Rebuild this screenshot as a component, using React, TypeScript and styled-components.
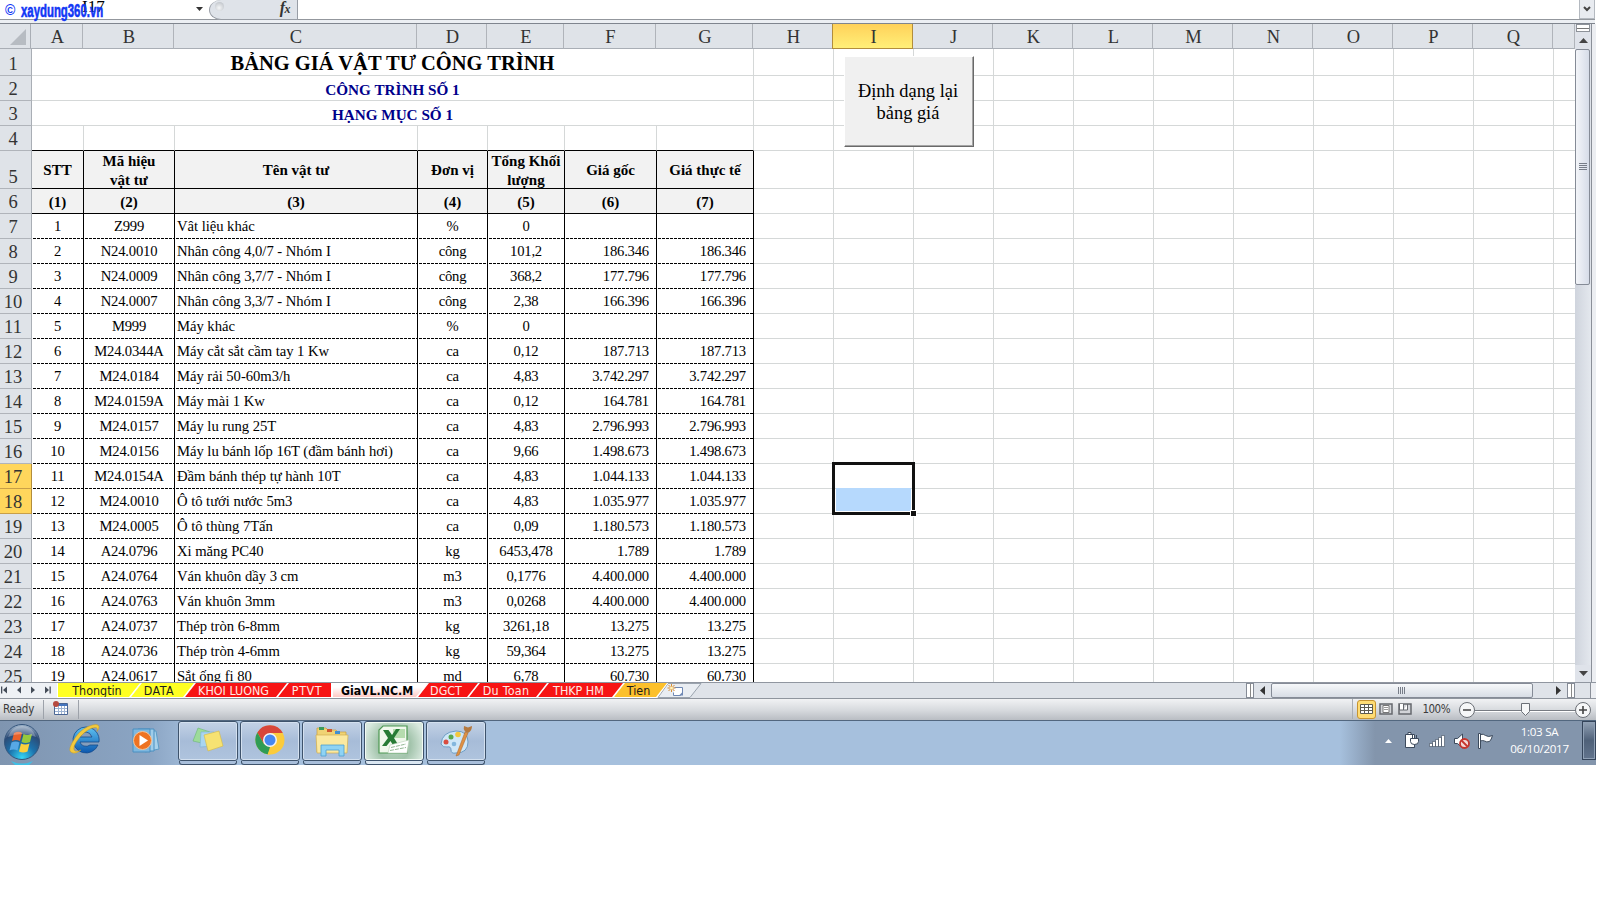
import React from "react";
import styled, { createGlobalStyle, css } from "styled-components";

interface Column {
    name: string;
    width: number;
}

type Align = "left" | "center" | "right";

const columns: Column[] = [
    { name: "A", width: 52 },
    { name: "B", width: 91 },
    { name: "C", width: 243 },
    { name: "D", width: 70 },
    { name: "E", width: 77 },
    { name: "F", width: 92 },
    { name: "G", width: 97 },
    ...["H", "I", "J", "K", "L", "M", "N", "O", "P", "Q"].map(name => ({ name, width: 80 })),
    { name: "", width: 22 },
];

const TABLE_COLUMNS = 7;
const aligns: Align[] = ["center", "center", "left", "center", "center", "right", "right"];

const titles = [
    { text: "BẢNG GIÁ VẬT TƯ CÔNG TRÌNH", height: 27, line: 27, size: 20.5, color: "#000000" },
    { text: "CÔNG TRÌNH SỐ 1", height: 25, line: 25, size: 15.2, color: "#00008b" },
    { text: "HẠNG MỤC SỐ 1", height: 25, line: 25, size: 15.2, color: "#00008b" },
];

const headings = ["STT", "Mã hiệu\nvật tư", "Tên vật tư", "Đơn vị", "Tổng Khối\nlượng", "Giá gốc", "Giá thực tế"];
const numbers = ["(1)", "(2)", "(3)", "(4)", "(5)", "(6)", "(7)"];

const materials: string[][] = [
    ["1", "Z999", "Vât liệu khác", "%", "0", "", ""],
    ["2", "N24.0010", "Nhân công 4,0/7 - Nhóm I", "công", "101,2", "186.346", "186.346"],
    ["3", "N24.0009", "Nhân công 3,7/7 - Nhóm I", "công", "368,2", "177.796", "177.796"],
    ["4", "N24.0007", "Nhân công 3,3/7 - Nhóm I", "công", "2,38", "166.396", "166.396"],
    ["5", "M999", "Máy khác", "%", "0", "", ""],
    ["6", "M24.0344A", "Máy cắt sắt cầm tay 1 Kw", "ca", "0,12", "187.713", "187.713"],
    ["7", "M24.0184", "Máy rải 50-60m3/h", "ca", "4,83", "3.742.297", "3.742.297"],
    ["8", "M24.0159A", "Máy mài 1 Kw", "ca", "0,12", "164.781", "164.781"],
    ["9", "M24.0157", "Máy lu rung 25T", "ca", "4,83", "2.796.993", "2.796.993"],
    ["10", "M24.0156", "Máy lu bánh lốp 16T (đầm bánh hơi)", "ca", "9,66", "1.498.673", "1.498.673"],
    ["11", "M24.0154A", "Đầm bánh thép tự hành 10T", "ca", "4,83", "1.044.133", "1.044.133"],
    ["12", "M24.0010", "Ô tô tưới nước 5m3", "ca", "4,83", "1.035.977", "1.035.977"],
    ["13", "M24.0005", "Ô tô thùng 7Tấn", "ca", "0,09", "1.180.573", "1.180.573"],
    ["14", "A24.0796", "Xi măng PC40", "kg", "6453,478", "1.789", "1.789"],
    ["15", "A24.0764", "Ván khuôn dầy 3 cm", "m3", "0,1776", "4.400.000", "4.400.000"],
    ["16", "A24.0763", "Ván khuôn 3mm", "m3", "0,0268", "4.400.000", "4.400.000"],
    ["17", "A24.0737", "Thép tròn 6-8mm", "kg", "3261,18", "13.275", "13.275"],
    ["18", "A24.0736", "Thép tròn 4-6mm", "kg", "59,364", "13.275", "13.275"],
    ["19", "A24.0617", "Sắt ống fi 80", "md", "6,78", "60.730", "60.730"],
];

const tabs = [
    { name: "Thongtin", width: 84, fill: "#ffff22", ink: "#1c1c1c", first: true },
    { name: "DATA", width: 65, fill: "#ffff22", ink: "#1c1c1c", spacing: 0.5, shift: 3 },
    { name: "KHOI LUONG", width: 104, fill: "#f71414", ink: "#ffe9e4", shift: 1 },
    { name: "PTVT", width: 55, fill: "#f71414", ink: "#ffe9e4", spacing: 0.6, flat: true },
    { name: "GiaVL.NC.M", width: 96, fill: "#ffc9c4", ink: "#000000", active: true },
    { name: "DGCT", width: 62, fill: "#f71414", ink: "#ffe9e4" },
    { name: "Du Toan", width: 80, fill: "#f71414", ink: "#ffe9e4", spacing: 0.3 },
    { name: "THKP HM", width: 87, fill: "#f71414", ink: "#ffe9e4" },
    { name: "Tien", width: 55, fill: "#fcc02c", ink: "#1c1c1c" },
];

export default function App() {
    return (
        <>
            <GlobalStyle />
            <SScreen>
                <FormulaBar />
                <SWorkArea>
                    <Sheet />
                    <VerticalScroll />
                    <SWindowEdge />
                </SWorkArea>
                <SheetTabs />
                <StatusBar />
                <Taskbar />
            </SScreen>
        </>
    );
}

const FormulaBar: React.FC = () => (
    <SFormulaBar>
        <SNameBox>
            <SCellName>I17</SCellName>
            <SWatermark><span>©</span><b>xaydung360.vn</b></SWatermark>
            <svg width="7" height="4"><path d="M0 0h7L3.5 4z" fill="#333" /></svg>
        </SNameBox>
        <SFxArea><SKnob /><SFx>f<small>x</small></SFx></SFxArea>
        <SFormulaInput />
        <SExpand>
            <svg width="8" height="6"><path d="M1 1l3 3 3-3" fill="none" stroke="#444" strokeWidth="2" /></svg>
        </SExpand>
    </SFormulaBar>
);

const Sheet: React.FC = () => (
    <SSheet>
        <SRow $height={25}>
            <SCorner><svg width="16" height="16"><path d="M16 0v16H0z" fill="#b7bcc2" /></svg></SCorner>
            {columns.map(col => (
                <SColumnHead key={col.name} $width={col.width} $active={col.name === "I"}>{col.name}</SColumnHead>
            ))}
        </SRow>
        {titles.map((title, i) => (
            <SRow key={title.text} $height={title.height}>
                <SRowHead>{i + 1}</SRowHead>
                <STitle $size={title.size} $line={title.line} $color={title.color}>{title.text}</STitle>
                <BlankCells from={TABLE_COLUMNS} />
            </SRow>
        ))}
        <SRow $height={25}>
            <SRowHead>4</SRowHead>
            {columns.slice(0, TABLE_COLUMNS).map(col => (
                <SBlank key={col.name} $width={col.width} $dark />
            ))}
            <BlankCells from={TABLE_COLUMNS} />
        </SRow>
        <SRow $height={38}>
            <SRowHead>5</SRowHead>
            {headings.map((text, i) => <SHeadCell key={text} $width={columns[i].width}>{text}</SHeadCell>)}
            <BlankCells from={TABLE_COLUMNS} />
        </SRow>
        <SRow $height={25}>
            <SRowHead>6</SRowHead>
            {numbers.map((text, i) => <SHeadCell key={text} $width={columns[i].width}>{text}</SHeadCell>)}
            <BlankCells from={TABLE_COLUMNS} />
        </SRow>
        {materials.map((cells, r) => (
            <SRow key={cells[0]} $height={25}>
                <SRowHead $active={r === 10 || r === 11}>{r + 7}</SRowHead>
                {cells.map((text, i) => (
                    <SDataCell key={i} $width={columns[i].width} $align={aligns[i]}>{text}</SDataCell>
                ))}
                <BlankCells from={TABLE_COLUMNS} />
            </SRow>
        ))}
        <SSelection><SSelectionFill /><SHandle /></SSelection>
        <SMacroButton>Định dạng lại{"\n"}bảng giá</SMacroButton>
    </SSheet>
);

const BlankCells: React.FC<{ from: number }> = ({ from }) => (
    <>
        {columns.slice(from).map(col => <SBlank key={col.name} $width={col.width} />)}
    </>
);

const VerticalScroll: React.FC = () => (
    <SVScroll>
        <SSplitBox />
        <SArrowBox><svg width="9" height="5"><path d="M4.500 0L9 5H0z" fill="#444" /></svg></SArrowBox>
        <SVThumb>
            <svg width="8" height="8"><path d="M0 .5h8M0 2.500h8M0 4.500h8M0 6.500h8" stroke="#777d88" /></svg>
        </SVThumb>
        <SVTrack />
        <SArrowBox><svg width="9" height="5"><path d="M0 0h9L4.500 5z" fill="#444" /></svg></SArrowBox>
    </SVScroll>
);

const SheetTabs: React.FC = () => (
    <STabBar>
        <STabNav>
            <svg width="57" height="15" fill="#444c58">
                <path d="M1 3.500h1.300v7H1zM7 3.500v7L3 7zM21 3.500v7L17 7zM31 3.500v7L35 7zM45 3.500v7L49 7zM49.500 3.500h1.300v7h-1.300z" />
            </svg>
        </STabNav>
        {tabs.map(tab => (
            <STab key={tab.name} $width={tab.width} $first={tab.first} $flat={tab.flat} $active={tab.active}>
                <STabFace
                    $fill={tab.fill}
                    $ink={tab.ink}
                    $first={tab.first}
                    $flat={tab.flat}
                    $active={tab.active}
                    $spacing={tab.spacing}
                    $shift={tab.shift}
                >
                    {tab.name}
                </STabFace>
            </STab>
        ))}
        <SNewTab width="46" height="15" viewBox="0 0 46 15">
            <path d="M11 .5h33L33 14.500H1z" fill="#e9edf2" stroke="#9aa3ae" />
            <path d="M17.500 4.500h8v6l-2 2h-7v-3" fill="#fff" stroke="#6f88b4" />
            <path d="M22 12.500l4-4v4z" fill="#6f88b4" />
            <path d="M14.500 1v8M10.500 5h8M11.500 2l6 6M17.500 2l-6 6" stroke="#d88d32" />
            <circle cx="14.500" cy="5" r="1.500" fill="#fff3b8" />
        </SNewTab>
        <STabSpacer />
        <SHSplit />
        <SHArrow><svg width="5" height="9"><path d="M5 0v9L0 4.500z" fill="#333" /></svg></SHArrow>
        <SHThumb>
            <svg width="8" height="7"><path d="M.5 0v7M2.500 0v7M4.500 0v7M6.500 0v7" stroke="#777d88" /></svg>
        </SHThumb>
        <SHTrack />
        <SHArrow><svg width="5" height="9"><path d="M0 0v9l5-4.500z" fill="#333" /></svg></SHArrow>
        <SHSplit />
        <STabEnd />
    </STabBar>
);

const StatusBar: React.FC = () => (
    <SStatusBar>
        <SReady>Ready</SReady>
        <SMacroIcon>
            <svg width="15" height="14" viewBox="0 0 15 14">
                <path d="M1.500 2.500h13v11h-13z" fill="#fff" stroke="#4a6694" />
                <path d="M2 3h12v2H2z" fill="#4475be" />
                <path d="M2 7.500h12M2 10.500h12M5.500 5v8M8.500 5v8M11.500 5v8" stroke="#9cb2d2" />
                <circle cx="3" cy="3" r="3" fill="#b5493f" />
            </svg>
        </SMacroIcon>
        <SStatusSpacer />
        <SViews>
            <SViewButton $active>
                <svg width="13" height="10"><path d="M.5.5h12v9H.5zM.5 3.500h12M.5 6.500h12M4.500 0v10M8.500 0v10" fill="#fff" stroke="#5d5b50" /></svg>
            </SViewButton>
            <SViewButton>
                <svg width="14" height="12"><path d="M1 1h12v10H1z" fill="#d2d4d8" stroke="#65686e" strokeWidth="1.500" /><path d="M4 2.500h6v7H4z" fill="#fff" stroke="#777" /><path d="M5 4.500h4M5 6.500h4" stroke="#999" /></svg>
            </SViewButton>
            <SViewButton>
                <svg width="14" height="12"><path d="M1 1h12v10H1z" fill="#d2d4d8" stroke="#65686e" strokeWidth="1.500" /><path d="M1.500 1v6h4V1M5.500 7h4V1" fill="#fff" stroke="#65686e" /></svg>
            </SViewButton>
        </SViews>
        <SZoomText>100%</SZoomText>
        <svg width="134" height="18" viewBox="0 0 134 18">
            <path d="M17 9.500h101" stroke="#777b82" />
            <path d="M17 10.500h101" stroke="#fff" />
            <g fill="#f6f7f8" stroke="#6b6f76">
                <circle cx="9" cy="9" r="7.500" />
                <circle cx="125" cy="9" r="7.500" />
                <path d="M63.500 2.500h8v8l-4 4-4-4z" />
            </g>
            <path d="M5 9h8M121 9h8M125 5v8" stroke="#444" strokeWidth="1.600" />
        </svg>
    </SStatusBar>
);

const Taskbar: React.FC = () => (
    <STaskbar>
        <SQuick $left={4} $top={2} $width={62}><StartOrb /></SQuick>
        <SQuick $left={6} $top={2} $width={66}><ExplorerLogo /></SQuick>
        <SQuick $left={4} $top={6} $width={42}><MediaPlayer /></SQuick>
        <STasks>
            <STask><StickyNotes /></STask>
            <STask><Chrome /></STask>
            <STask><Folder /></STask>
            <STask $active><Excel /></STask>
            <STask><Palette /></STask>
        </STasks>
        <STray>
            <TrayIcons />
            <SClock><span>1:03 SA</span><span>06/10/2017</span></SClock>
            <SShowDesktop />
        </STray>
    </STaskbar>
);

const StartOrb: React.FC = () => (
    <svg width="38" height="45" viewBox="0 0 38 45">
        <defs>
            <radialGradient id="orb" cx=".5" cy=".95" r=".95">
                <stop offset="0" stopColor="#35d6f5" />
                <stop offset=".4" stopColor="#1c73ad" />
                <stop offset=".75" stopColor="#2c4b76" />
                <stop offset="1" stopColor="#a9bdd2" />
            </radialGradient>
        </defs>
        <path d="M7 38q11 5 22 0l-4 4q-7 2-14 0z" fill="#3fc0e6" />
        <circle cx="18" cy="19" r="17.500" fill="url(#orb)" stroke="#34557c" />
        <path d="M10 10q5-2.500 8 0l-2 8q-4-2-8 0z" fill="#e9612a" />
        <path d="M19.500 11q4 2 8.500 0l-2 8q-4.500 2-8.500 0z" fill="#97c93c" />
        <path d="M7.500 19.500q4-2 8 0l-2 8q-4-2-8 0z" fill="#57a8e6" />
        <path d="M17 20.500q4 2 8.500 0l-2 8q-4.500 2-8.500 0z" fill="#fbd03c" />
        <path d="M4 14Q8 3 18 3t14 11q-14-6-28 0z" fill="#fff" opacity=".28" />
    </svg>
);

const ExplorerLogo: React.FC = () => (
    <svg width="34" height="34" viewBox="0 0 34 34">
        <defs>
            <linearGradient id="ie" x2="0" y2="1">
                <stop offset="0" stopColor="#5fc3f2" />
                <stop offset="1" stopColor="#0b57ae" />
            </linearGradient>
        </defs>
        <path
            d="M18 4a13 13 0 1 0 12 18h-8a6 5 0 0 1-10-3h19A13 13 0 0 0 18 4zM12 14q2-5 6-5t6 5z"
            fill="url(#ie)" stroke="#154b8c" strokeWidth=".8" fillRule="evenodd"
        />
        <path d="M5 30q-6-1-1-10Q10 8 20 3.500q10-4 11 0 .5 2-2 5 1.500-4-2-4Q20 5 12 14 3 25 7 28q2 1 6-1-5 4-8 3z" fill="#f3c93d" stroke="#c39824" strokeWidth=".5" />
    </svg>
);

const MediaPlayer: React.FC = () => (
    <svg width="30" height="28" viewBox="0 0 30 28">
        <path d="M10 4h14l3 18-14 3z" fill="#a9d2ec" stroke="#5c9cc6" />
        <path d="M6 2h16v22H6z" fill="#9fcdea" stroke="#4b8fc0" />
        <path d="M1 2h17v23H1z" fill="#7fb8df" stroke="#4b8fc0" />
        <circle cx="10.500" cy="13.500" r="9" fill="#ee7322" stroke="#f8c395" />
        <path d="M7.500 8l8.500 5.500L7.500 19z" fill="#fff" />
    </svg>
);

const StickyNotes: React.FC = () => (
    <svg width="32" height="28" viewBox="0 0 32 28">
        <path d="M6 3l12 4-4 12L1 16z" fill="#9ddb9a" stroke="#6cb873" strokeWidth=".6" />
        <path d="M9 7h13l1 14-15 1z" fill="#a9d5f1" stroke="#7ab0d8" strokeWidth=".6" />
        <path d="M12 10l15-4 4 15-15 5z" fill="#f6e272" stroke="#d4b945" strokeWidth=".6" />
    </svg>
);

const Chrome: React.FC = () => (
    <svg width="30" height="30" viewBox="0 0 30 30">
        <circle cx="15" cy="15" r="14.500" fill="#fbcb3c" />
        <path d="M15 15L8.700 18.500 2.300 7.600A14.500 14.500 0 0 1 27.800 8H15z" fill="#d8463a" />
        <path d="M2.300 7.600L8.700 18.500 15 22l-2.200 7.300A14.500 14.500 0 0 1 2.300 7.600z" fill="#2f9c55" />
        <path d="M21.300 18.500L15 29.500h-2.500L17 21z" fill="#fbcb3c" />
        <circle cx="15" cy="15" r="7" fill="#f4f4f4" />
        <circle cx="15" cy="15" r="5.500" fill="#4688f1" />
    </svg>
);

const Folder: React.FC = () => (
    <svg width="34" height="32" viewBox="0 0 34 32">
        <path d="M2 3h9l2 2h8l2 2h8v20H2z" fill="#f0d374" stroke="#c79f40" strokeWidth=".7" />
        <path d="M4 2h5v3H4z" fill="#3b9b5c" />
        <path d="M12 4h5v3h-5z" fill="#d0572f" />
        <path d="M20 6h5v3h-5z" fill="#408fd1" />
        <path d="M1 10h32l-1 18H2z" fill="#fbe9a0" stroke="#d3b050" strokeWidth=".7" />
        <path d="M6 31V20h23v11h-5v-6H11v6z" fill="#8fd3f4" stroke="#4da0d0" strokeWidth=".8" />
    </svg>
);

const Excel: React.FC = () => (
    <svg width="32" height="32" viewBox="0 0 32 32">
        <path d="M5 1h24v27H1V5z" fill="#f0f8ec" stroke="#4d9852" strokeWidth="1.200" />
        <path d="M15 4h12v9H15z" fill="#b5dcae" />
        <path d="M5 5h5.500l3.500 5 4-6h4l-6 9 5 8h-5.500l-3-5-4 5H4l6-8z" fill="#277b35" />
        <path d="M12 20l19-5-2 13H10z" fill="#fff" stroke="#b7d0b5" strokeWidth=".6" />
        <path d="M13 22.500l15-3.500M12 25.500l16-3" stroke="#93b894" strokeDasharray="4 1" />
    </svg>
);

const Palette: React.FC = () => (
    <svg width="34" height="32" viewBox="0 0 34 32">
        <path d="M2 19Q3 7 17 6q12 0 12 11T17 28q-5 1-5-3t-4-3-6-3z" fill="#cfe7f7" stroke="#6c9cc4" />
        <circle cx="7" cy="17" r="2.500" fill="#d94d40" />
        <circle cx="12" cy="12" r="2.500" fill="#57a84f" />
        <circle cx="19" cy="9.500" r="2.800" fill="#f2c83c" />
        <circle cx="15" cy="19" r="2.300" fill="#83b7dd" />
        <path d="M26 7l3 1-9 22-3 1z" fill="#de9144" stroke="#a9642a" strokeWidth=".5" />
        <path d="M25 1l4 1.500L33 1q0 5-4 7l-3-1.500q-2-2.500-1-5.500z" fill="#b5793f" />
    </svg>
);

const TrayIcons: React.FC = () => (
    <STrayIcons width="108" height="20" viewBox="0 0 108 20">
        <path d="M0 12h7L3.500 8z" fill="#fff" />
        <g fill="#fff" stroke="#3c4a5c">
            <path d="M20.500 3.500h9v13h-9zM23 1.500h3v2h-3z" />
            <path d="M25.500 7.500h8v3q0 3-4 3t-4-3zM27.500 4v3.500M31.500 4v3.500M29.500 13.500v3h-4" />
            <path d="M44.500 12.500h3v3h-3zM47.500 10.500h3v5h-3zM50.500 8.500h3v7h-3zM53.500 6.500h3v9h-3zM56.500 4.500h3v11h-3z" strokeWidth=".6" />
            <path d="M69.500 7.500h3l5-4.500v14l-5-4.500h-3z" />
            <path d="M93.500 2.500h2v15h-2zM95.500 3.500q3-1 5 1 3 2 7 0-1 4-3 6-3 1-5-.5-2-1-4 0z" />
        </g>
        <circle cx="79.500" cy="12.500" r="4.500" fill="#f3dbd8" stroke="#c5352c" strokeWidth="1.800" />
        <path d="M76.500 9.500l6 6" stroke="#c5352c" strokeWidth="1.800" />
    </STrayIcons>
);

const GlobalStyle = createGlobalStyle`
    body {
        margin: 0;
        background: #ffffff;
    }
    *, *::before, *::after {
        box-sizing: border-box;
    }
    svg {
        flex: none;
        display: block;
    }
`

const serif = css`
    font-family: "Liberation Serif", "Times New Roman", serif;
`

const tahoma = css`
    font-family: "DejaVu Sans Condensed", "DejaVu Sans", sans-serif;
`

const SScreen = styled.main`
    width: 1600px;
    height: 900px;
    overflow: hidden;
    background: #ffffff;
    ${serif}
`

const SFormulaBar = styled.div`
    display: flex;
    width: 1595px;
    height: 24px;
    border-bottom: 1px solid #7f858e;
    background: linear-gradient(#ffffff 0 19px, #93979d 19px 20px, #eceff3 20px);
`

const SNameBox = styled.div`
    position: relative;
    display: flex;
    justify-content: flex-end;
    width: 209px;
    height: 19px;
    padding: 7px 6px 0 0;
`

const SCellName = styled.span`
    position: absolute;
    left: 82px;
    top: -3px;
    font-size: 17px;
    line-height: 20px;
`

const SWatermark = styled.div`
    position: absolute;
    left: 5px;
    top: 0;
    display: flex;
    gap: 6px;
    color: #1238f5;
    font-family: "Liberation Sans", Arial, sans-serif;
    font-size: 14px;
    font-weight: bold;
    line-height: 21px;
    white-space: nowrap;

    b {
        width: 82px;
        font-size: 17.5px;
        line-height: 23px;
        transform: scaleX(0.65);
        transform-origin: left;
        -webkit-text-stroke: 0.6px #1238f5;
    }
`

const SFxArea = styled.div`
    display: flex;
    justify-content: space-between;
    width: 89px;
    height: 20px;
    padding: 2px 7px 0 5px;
    border: 1px solid #989da5;
    border-top: none;
    border-radius: 12px 0 0 12px / 10px 0 0 10px;
    background: #dfe3e9;
`

const SKnob = styled.i`
    width: 9px;
    height: 9px;
    border-radius: 50%;
    background: radial-gradient(circle at 45% 65%, #f6f7f8, #b3b8bf);
`

const SFx = styled.em`
    font-size: 16px;
    font-weight: bold;
    line-height: 12px;
    letter-spacing: -0.5px;
    color: #333333;

    small {
        font-size: 12px;
    }
`

const SFormulaInput = styled.div`
    flex: 1;
`

const SExpand = styled.div`
    display: flex;
    align-items: center;
    justify-content: center;
    width: 16px;
    height: 19px;
    border: 1px solid #b4b9c0;
    border-top: none;
    background: #e8ebf0;
`

const SWorkArea = styled.div`
    display: flex;
    width: 1596px;
    height: 658px;
`

const SSheet = styled.div`
    position: relative;
    width: 1575px;
    overflow: hidden;
`

const SRow = styled.div<{ $height: number }>`
    display: flex;
    height: ${p => p.$height}px;
`

const SCorner = styled.div`
    display: flex;
    align-items: flex-end;
    justify-content: flex-end;
    width: 32px;
    padding: 0 4px 3px 0;
    border-right: 1px solid #a9aeb5;
    border-bottom: 1px solid #a9aeb5;
    background: #dfe3e8;
`

const SColumnHead = styled.div<{ $width: number; $active?: boolean }>`
    flex: none;
    width: ${p => p.$width}px;
    padding-left: 2px;
    border-right: 1px solid ${p => (p.$active ? "#b28d3c" : "#b0b4ba")};
    border-bottom: 1px solid ${p => (p.$active ? "#b28d3c" : "#a9aeb5")};
    background: ${p => (p.$active ? "linear-gradient(#ffd15a, #ffef78)" : "#dfe3e8")};
    box-shadow: ${p => (p.$active ? "-1px 0 #b28d3c" : "none")};
    color: #333333;
    font-size: 18.5px;
    line-height: 27px;
    text-align: center;
`

const SRowHead = styled.div<{ $active?: boolean }>`
    flex: none;
    display: flex;
    align-items: flex-end;
    justify-content: center;
    width: 32px;
    padding-right: 5px;
    border-right: 1px solid ${p => (p.$active ? "#b28d3c" : "#a9aeb5")};
    border-bottom: 1px solid ${p => (p.$active ? "#c89f48" : "#b0b4ba")};
    background: ${p => (p.$active ? "#ffd65c" : "#dfe3e8")};
    color: #333333;
    font-size: 18.5px;
    line-height: 21px;
`

const STitle = styled.div<{ $size: number; $line: number; $color: string }>`
    flex: none;
    width: 722px;
    padding-top: 1px;
    border-right: 1px solid #d5d8d8;
    border-bottom: 1px solid #d5d8d8;
    color: ${p => p.$color};
    font-size: ${p => p.$size}px;
    font-weight: bold;
    line-height: ${p => p.$line}px;
    text-align: center;
`

const SBlank = styled.div<{ $width: number; $dark?: boolean }>`
    flex: none;
    width: ${p => p.$width}px;
    border-right: 1px solid #d5d8d8;
    border-bottom: 1px solid ${p => (p.$dark ? "#000000" : "#d5d8d8")};
`

const SHeadCell = styled.div<{ $width: number }>`
    flex: none;
    display: flex;
    align-items: center;
    justify-content: center;
    width: ${p => p.$width}px;
    padding-top: 2px;
    border-right: 1px solid #000000;
    border-bottom: 1px solid #000000;
    background: #f2f2f2;
    font-size: 15px;
    font-weight: bold;
    line-height: 19px;
    text-align: center;
    white-space: pre;
`

const SDataCell = styled.div<{ $width: number; $align: Align }>`
    flex: none;
    width: ${p => p.$width}px;
    padding: 0 ${p => (p.$align === "right" ? 7 : 0)}px 0 ${p => (p.$align === "left" ? 2 : 0)}px;
    border-right: 1px solid #000000;
    background: repeating-linear-gradient(90deg, #ffffff 0 1px, #000000 1px 4px) left bottom / 100% 1px no-repeat;
    font-size: 14.67px;
    letter-spacing: ${p => (p.$align === "left" ? -0.04 : -0.2)}px;
    line-height: 25px;
    text-align: ${p => p.$align};
    white-space: nowrap;
`

// Marks I17:I18, drawn over the grid lines
const SSelection = styled.div`
    position: absolute;
    left: 832px;
    top: 438px;
    width: 83px;
    height: 53px;
    padding: 23px 1px 1px;
    border: 3px solid #111111;
`

const SSelectionFill = styled.div`
    height: 23px;
    background: #b6d9fd;
`

const SHandle = styled.i`
    position: absolute;
    right: -5px;
    bottom: -5px;
    width: 7px;
    height: 7px;
    border: 1px solid #ffffff;
    background: #111111;
`

const SMacroButton = styled.button`
    position: absolute;
    left: 844px;
    top: 32px;
    width: 130px;
    height: 91px;
    padding: 0 2px 0 0;
    border: 1px solid;
    border-color: #ffffff #696969 #696969 #ffffff;
    background: #f0f0f0;
    box-shadow: inset -1px -1px #a5a5a5;
    color: #000000;
    ${serif}
    font-size: 18.4px;
    line-height: 22px;
    white-space: pre;
`

const SVScroll = styled.div`
    display: flex;
    flex-direction: column;
    width: 16px;
    background: #dfe3ea;
`

const SSplitBox = styled.i`
    height: 8px;
    margin: 0 1px;
    border: 1px solid #8d9299;
    background: linear-gradient(#ffffff 3px, #777777 3px 4px, #ffffff 4px);
`

const SArrowBox = styled.div`
    display: flex;
    align-items: center;
    justify-content: center;
    height: 17px;
`

const SVThumb = styled.div`
    display: flex;
    align-items: center;
    justify-content: center;
    width: 15px;
    height: 236px;
    border: 1px solid #858b96;
    border-radius: 2px;
    background: linear-gradient(90deg, #f3f5f9, #d6dce8);
`

const SVTrack = styled.div`
    flex: 1;
    background: linear-gradient(90deg, #cfd4dd, #e4e8ee);
`

const SWindowEdge = styled.div`
    flex: 1;
    border-left: 1px solid #8a8f98;
    background: #eceef2;
`

const STabBar = styled.div`
    display: flex;
    width: 1596px;
    height: 16px;
    border-top: 1px solid #9096a0;
    background: #dfe3e9;
`

const STabNav = styled.div`
    width: 57px;
    background: #eef1f5;
`

interface TabShape {
    $first?: boolean;
    $flat?: boolean;
    $active?: boolean;
}

interface TabLook extends TabShape {
    $fill: string;
    $ink: string;
    $spacing?: number;
    $shift?: number;
}

const tabClip = (p: TabShape) => {
    const left = p.$first || p.$active ? "0" : "11px";
    const right = p.$flat ? "100%" : "calc(100% - 11px)";
    return `polygon(${left} 0, 100% 0, ${right} 100%, 0 100%)`;
};

const STab = styled.div<TabShape & { $width: number }>`
    flex: none;
    width: ${p => p.$width}px;
    height: 15px;
    margin-left: ${p => (p.$first || p.$active ? 0 : -11)}px;
    padding: 0 1px 1px;
    background: #ffffff;
    clip-path: ${tabClip};
`

const STabFace = styled.div<TabLook>`
    height: 14px;
    padding-right: ${p => (p.$flat ? 0 : p.$active ? 6 : 4 + (p.$shift ?? 0))}px;
    padding-left: ${p => (p.$flat ? 5 : 0)}px;
    background: ${p => (p.$active ? `linear-gradient(#ffffff 30%, ${p.$fill})` : p.$fill)};
    clip-path: ${tabClip};
    color: ${p => p.$ink};
    ${tahoma}
    font-size: ${p => (p.$active ? 12.2 : 12.4)}px;
    font-weight: ${p => (p.$active ? "bold" : "normal")};
    letter-spacing: ${p => p.$spacing ?? 0}px;
    line-height: ${p => (p.$active ? 16 : 15)}px;
    text-align: center;
    white-space: nowrap;
`

const SNewTab = styled.svg`
    margin-left: -11px;
`

const STabSpacer = styled.div`
    flex: 1;
`

const SHSplit = styled.i`
    width: 8px;
    height: 15px;
    border: 1px solid #858b96;
    background: linear-gradient(90deg, #ffffff 3px, #888888 3px 4px, #ffffff 4px);
`

const SHArrow = styled.div`
    display: flex;
    align-items: center;
    justify-content: center;
    width: 17px;
`

const SHThumb = styled.div`
    display: flex;
    align-items: center;
    justify-content: center;
    width: 262px;
    height: 15px;
    border: 1px solid #858b96;
    border-radius: 2px;
    background: linear-gradient(#f6f8fa, #d8dde5);
`

const SHTrack = styled.div`
    width: 17px;
`

const STabEnd = styled.div`
    width: 21px;
    border-right: 5px solid #eceef2;
    box-shadow: inset -1px 0 #8a8f98;
`

const SStatusBar = styled.div`
    display: flex;
    align-items: center;
    width: 1596px;
    height: 22px;
    padding-right: 4px;
    border-top: 1px solid #8f959e;
    background: linear-gradient(#f1f2f4, #d6d9dd 55%, #b9bdc3);
    ${tahoma}
`

const SReady = styled.span`
    width: 43px;
    padding-left: 3px;
    color: #3b3b3b;
    font-size: 11.5px;
    letter-spacing: -0.2px;
    line-height: 14px;
    margin-top: -1px;
`

const SMacroIcon = styled.div`
    display: flex;
    align-items: center;
    justify-content: center;
    width: 36px;
    height: 19px;
    padding-right: 2px;
    border: 1px solid #9da2aa;
    border-width: 0 1px;

    svg {
        margin-top: -3px;
    }
`

const SStatusSpacer = styled.div`
    flex: 1;
`

const SViews = styled.div`
    display: flex;
    align-items: center;
    height: 20px;
    margin-top: -1px;
    padding-left: 4px;
    border-left: 1px solid #a8adb4;
`

const SViewButton = styled.div<{ $active?: boolean }>`
    display: flex;
    align-items: center;
    justify-content: center;
    width: 19px;
    height: 19px;
    border-radius: 3px;
    border: ${p => (p.$active ? "1px solid #c79431" : "none")};
    background: ${p => (p.$active ? "#ffdc74" : "none")};
`

const SZoomText = styled.span`
    margin-top: -1px;
    padding: 0 8px 0 8px;
    color: #3b3b3b;
    font-size: 11.5px;
    letter-spacing: -0.5px;
`

const STaskbar = styled.div`
    display: flex;
    width: 1596px;
    height: 45px;
    border-top: 1px solid #52677f;
    background: linear-gradient(90deg, #7f95b0 0, #8ba5c4 150px, #a6c0dd 200px, #a6c0dd 1340px, #8395ac 1375px, #8395ac 100%);
    overflow: hidden;
`

const SQuick = styled.div<{ $left: number; $top: number; $width: number }>`
    width: ${p => p.$width}px;
    padding: ${p => p.$top}px 0 0 ${p => p.$left}px;
`

const STasks = styled.div`
    display: flex;
    gap: 2px;
    margin-left: 8px;
`

const STask = styled.div<{ $active?: boolean }>`
    position: relative;
    display: flex;
    justify-content: center;
    width: 60px;
    height: 40px;
    padding: 3px 1px 0 0;
    border: 1px solid #3e536c;
    border-radius: 3px;
    background: ${p => (p.$active
        ? "radial-gradient(circle at 50% 60%, #b9d8c0, #a3c4ac 45%, #d9e9df 85%)"
        : "linear-gradient(#c3d2e6, #a7bcd8 50%, #afc4de)")};
    box-shadow: inset 0 0 0 1px ${p => (p.$active ? "#f2faf3" : "#d3e0ef")};

    &::after {
        content: "";
        position: absolute;
        left: 0;
        right: 0;
        top: 39px;
        height: 4px;
        border: 1px solid #3e536c;
        border-top: none;
        border-radius: 0 0 3px 3px;
        background: ${p => (p.$active ? "#dbe7f2" : "#a9bfdb")};
    }
`

const STray = styled.div`
    display: flex;
    align-items: center;
    margin-left: auto;
`

const STrayIcons = styled.svg`
    margin-bottom: 5px;
`

const SClock = styled.div`
    display: flex;
    flex-direction: column;
    align-items: center;
    width: 59px;
    margin: 0 13px 6px 17px;
    color: #ffffff;
    font-family: "Open Sans", "Noto Sans", sans-serif;
    font-size: 11.6px;
    letter-spacing: -0.3px;
    line-height: 17px;
    white-space: nowrap;
`

const SShowDesktop = styled.i`
    align-self: flex-start;
    width: 14px;
    height: 39px;
    border: 1px solid #34445a;
    background: linear-gradient(#91a1b5, #4f6179 50%, #62748d);
    box-shadow: inset 0 0 0 1px #8fa0b5;
`
